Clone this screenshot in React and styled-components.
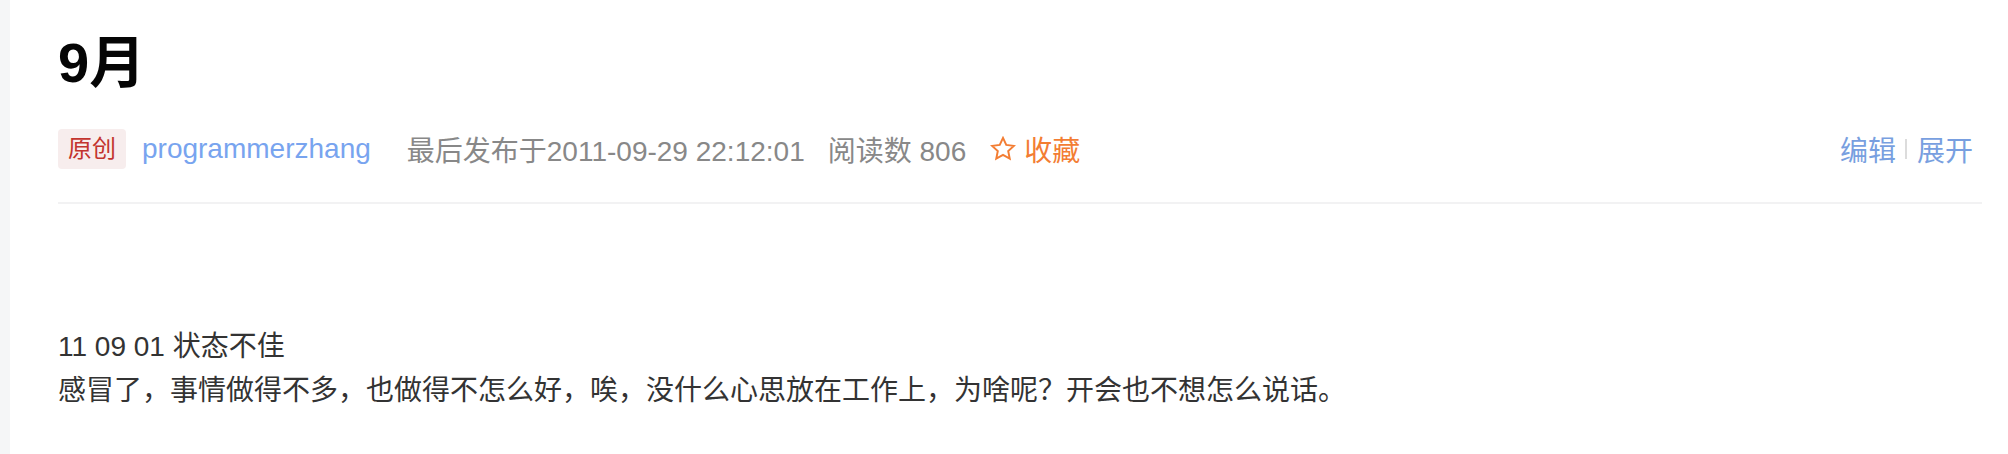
import React from 'react';
import styled, { createGlobalStyle } from 'styled-components';

const GlobalStyle = createGlobalStyle`
    html, body {
        margin: 0;
        padding: 0;
        background: #f5f6f7;
    }
    body {
        font-family: 'Liberation Sans', 'Noto Sans CJK SC', sans-serif;
    }
`;

const Page = styled.div`
    min-height: 454px;
    padding-left: 10px;
    display: flex;
`;

const Article = styled.article`
    flex: 1;
    background: #fff;
    padding: 26px 26px 40px 48px;
    min-height: 454px;
    box-sizing: border-box;
`;

const Title = styled.h1`
    margin: 0;
    font-size: 56px;
    font-weight: 700;
    line-height: 74px;
    color: #050505;
`;

const InfoBar = styled.div`
    display: flex;
    align-items: center;
    height: 40px;
    margin-top: 29px;
    padding-bottom: 33px;
    border-bottom: 2px solid #f2f2f3;
    font-size: 28px;
`;

const TypeTag = styled.span`
    background: #f7eded;
    color: #c3342e;
    font-size: 24px;
    line-height: 40px;
    padding: 0 10px;
    border-radius: 4px;
`;

const NickName = styled.a`
    margin-left: 16px;
    color: #78a4ef;
    text-decoration: none;
`;

const Meta = styled.span`
    margin-left: ${p => p.gap}px;
    color: #888;
`;

const Collect = styled.a`
    margin-left: 24px;
    display: flex;
    align-items: center;
    gap: 8px;
    color: #f37d33;
    text-decoration: none;
`;

const Operations = styled.div`
    margin-left: auto;
    padding-right: 9px;
    display: flex;
    align-items: center;
`;

const OpLink = styled.a`
    color: #789fe0;
    text-decoration: none;
`;

const OpDivider = styled.span`
    width: 2px;
    height: 20px;
    margin: 0 10px 0 9px;
    background: #dcdcdc;
`;

const Content = styled.div`
    padding-top: 121px;
    font-size: 28px;
    line-height: 44px;
    color: #333;
`;

const StarIcon = () => (
    <svg width="26" height="26" viewBox="0 0 24 24" fill="none">
        <path
            d="M12 1.8l3 6.4 7 .9-5.2 4.8 1.4 7L12 17.5l-6.2 3.4 1.4-7L2 9.1l7-.9z"
            stroke="#f37d33"
            strokeWidth="1.8"
            strokeLinejoin="miter"
        />
    </svg>
);

const App = () => (
    <Page>
        <GlobalStyle />
        <Article>
            <Title>9月</Title>
            <InfoBar>
                <TypeTag>原创</TypeTag>
                <NickName href="#">programmerzhang</NickName>
                <Meta gap={36}>最后发布于2011-09-29 22:12:01</Meta>
                <Meta gap={23}>阅读数 806</Meta>
                <Collect href="#">
                    <StarIcon />
                    收藏
                </Collect>
                <Operations>
                    <OpLink href="#">编辑</OpLink>
                    <OpDivider />
                    <OpLink href="#">展开</OpLink>
                </Operations>
            </InfoBar>
            <Content>
                <div>11 09 01 状态不佳</div>
                <div>感冒了，事情做得不多，也做得不怎么好，唉，没什么心思放在工作上，为啥呢？开会也不想怎么说话。</div>
            </Content>
        </Article>
    </Page>
);

export default App;
